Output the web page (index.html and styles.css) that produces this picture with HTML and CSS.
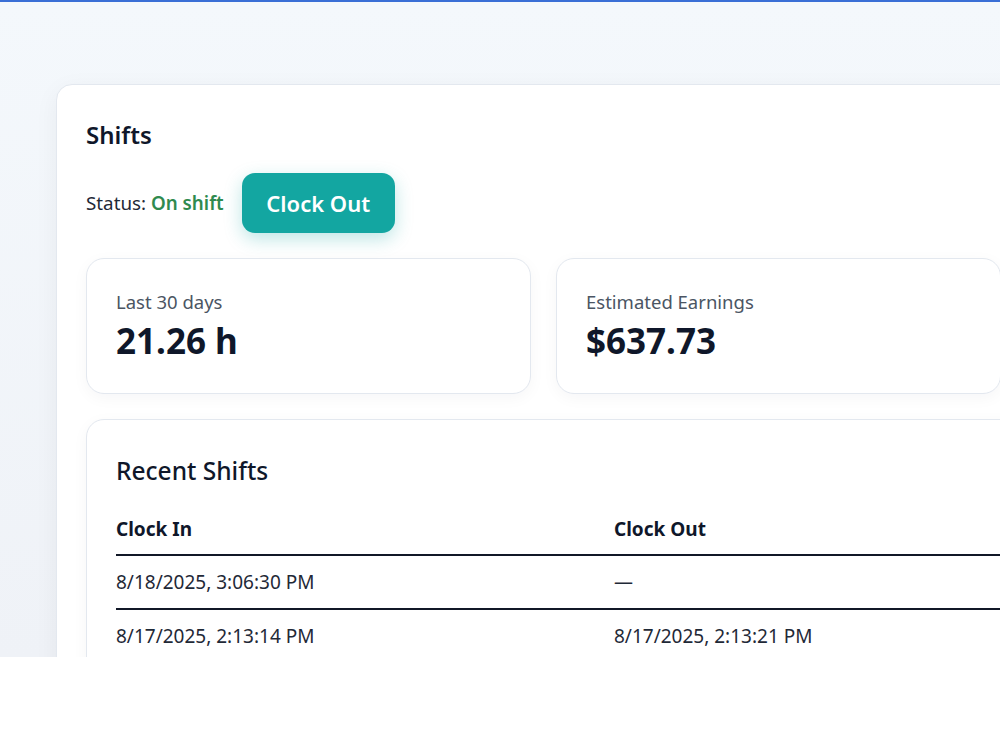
FILE: index.html
```html
<!DOCTYPE html>
<html>
<head>
    <meta charset="UTF-8">
    <meta name="viewport" content="width=device-width, initial-scale=1.0">
    <title>Shifts</title>
    <link rel="stylesheet" href="styles.css">
</head>
<body>
<!-- Visible part of the app window -->
<div class="screen">
    <div class="panel">
        <h2 class="panel-title">Shifts</h2>

        <!-- Current status and clock button -->
        <div class="status-row">
            <span class="status">Status: <span class="status-on">On shift</span></span>
            <button class="clock-btn">Clock Out</button>
        </div>

        <!-- Summary cards -->
        <div class="stats">
            <div class="stat-card">
                <div class="stat-label">Last 30 days</div>
                <div class="stat-value">21.26 h</div>
            </div>
            <div class="stat-card">
                <div class="stat-label">Estimated Earnings</div>
                <div class="stat-value">$637.73</div>
            </div>
        </div>

        <!-- Recent shifts table -->
        <div class="recent-card">
            <h3 class="recent-title">Recent Shifts</h3>
            <table class="shifts-table">
                <thead>
                    <tr>
                        <th class="col-in">Clock In</th>
                        <th>Clock Out</th>
                    </tr>
                </thead>
                <tbody>
                    <tr>
                        <td>8/18/2025, 3:06:30 PM</td>
                        <td>—</td>
                    </tr>
                    <tr>
                        <td>8/17/2025, 2:13:14 PM</td>
                        <td>8/17/2025, 2:13:21 PM</td>
                    </tr>
                </tbody>
            </table>
        </div>
    </div>
</div>
</body>
</html>
```

FILE: styles.css
```css
/* Page reset */
html, body {
    margin: 0;
    padding: 0;
    background: #ffffff;
    font-family: "Noto Sans", "Open Sans", sans-serif;
    color: #0f172a;
}

/* The app area that is visible in the window */
.screen {
    height: 657px;
    overflow: hidden;
    border-top: 2px solid #3a6fd6;
    background: linear-gradient(180deg, #f4f8fc 0%, #eff2f7 100%);
    padding: 82px 0 0 56px;
    box-sizing: border-box;
}

/* Main white panel (runs past the right edge of the window) */
.panel {
    width: 1100px;
    min-height: 700px;
    background: #ffffff;
    border: 1px solid #e3e8ef;
    border-radius: 16px;
    box-shadow: 0 6px 24px rgba(15, 23, 42, 0.05);
    padding: 34px 30px 30px 29px;
    box-sizing: border-box;
}

.panel-title {
    margin: 0;
    font-size: 24px;
    font-weight: 600;
    line-height: 32px;
}

/* Status line */
.status-row {
    display: flex;
    align-items: center;
    gap: 18px;
    margin-top: 22px;
}

.status {
    font-size: 18.8px;
    color: #1f2937;
}

.status-on {
    color: #2f8a4f;
    font-weight: 600;
}

.clock-btn {
    width: 153px;
    height: 60px;
    border: none;
    border-radius: 13px;
    background: #13a6a1;
    color: #ffffff;
    font-family: inherit;
    font-size: 22px;
    font-weight: 600;
    box-shadow: 0 6px 18px rgba(19, 165, 160, 0.28);
}

/* Summary cards */
.stats {
    display: grid;
    grid-template-columns: 445px 445px;
    gap: 25px;
    margin-top: 25px;
}

.stat-card {
    height: 136px;
    border: 1px solid #e3e8ef;
    border-radius: 18px;
    background: #ffffff;
    box-shadow: 0 4px 16px rgba(15, 23, 42, 0.04);
    padding: 30px 29px;
    box-sizing: border-box;
}

.stat-label {
    font-size: 18.5px;
    color: #4b5563;
    line-height: 26px;
}

.stat-value {
    font-size: 35px;
    font-weight: 700;
    line-height: 44px;
    margin-top: 4px;
    color: #0f172a;
}

/* Recent shifts */
.recent-card {
    margin-top: 25px;
    border: 1px solid #e3e8ef;
    border-radius: 18px;
    background: #ffffff;
    box-shadow: 0 4px 16px rgba(15, 23, 42, 0.04);
    padding: 34px 29px 30px;
    min-height: 300px;
    box-sizing: border-box;
}

.recent-title {
    margin: 0;
    font-size: 24.5px;
    font-weight: 500;
    line-height: 34px;
}

.shifts-table {
    width: 100%;
    border-collapse: collapse;
    margin-top: 29px;
}

.shifts-table th,
.shifts-table td {
    text-align: left;
    line-height: 24px;
    border-bottom: 2px solid #111827;
}

.shifts-table th {
    font-size: 19px;
    font-weight: 700;
    padding: 0 0 13px;
}

.shifts-table td {
    font-size: 19px;
    color: #1f2937;
    padding: 14px 0;
}

.col-in {
    width: 498px;
}
```
